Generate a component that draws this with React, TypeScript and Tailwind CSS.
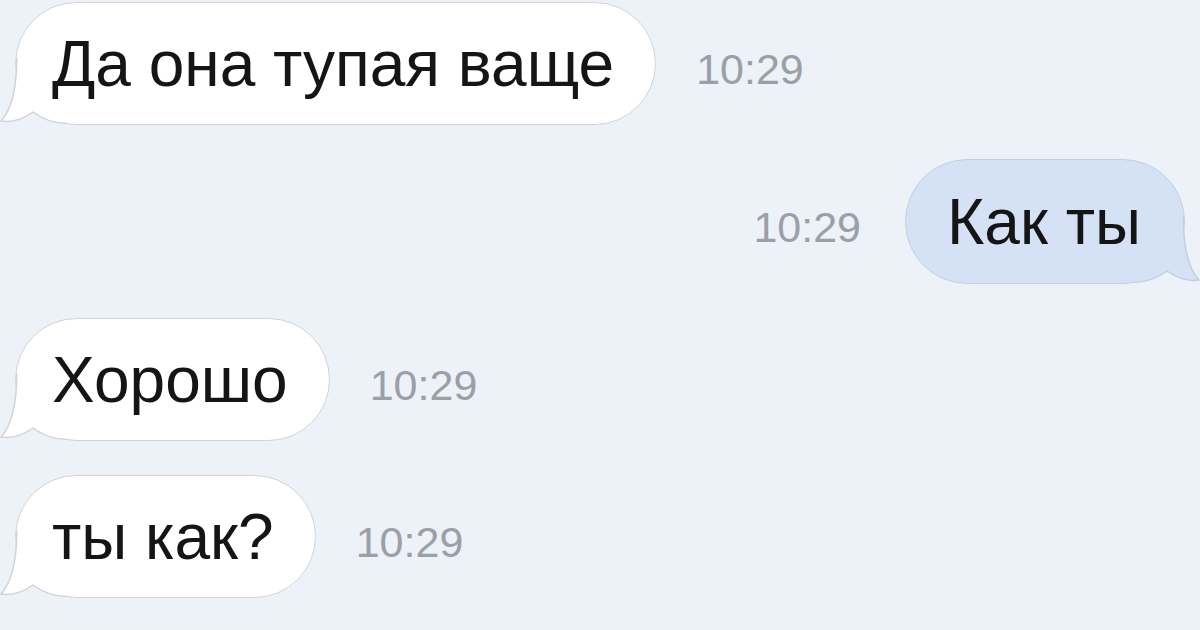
import React from "react";

type Msg = { text: string; time: string; mine?: boolean };

const messages: Msg[] = [
  { text: "Да она тупая ваще", time: "10:29" },
  { text: "Как ты", time: "10:29", mine: true },
  { text: "Хорошо", time: "10:29" },
  { text: "ты как?", time: "10:29" },
];

// tail drawn in coords relative to the bubble's bottom-left corner
const Tail = ({ mine }: { mine?: boolean }) => {
  const fill = mine ? "#d5e2f5" : "#ffffff";
  const stroke = mine ? "#c2cfe1" : "#d0d3d9";
  return (
    <svg
      width="68"
      height="70"
      viewBox="-17 -69 68 70"
      className={
        mine
          ? "absolute -right-[17px] -bottom-px -scale-x-100"
          : "absolute -left-[17px] -bottom-px"
      }
    >
      <path
        d="M 0.75 -66 C 0.75 -38 -3 -16 -15 -3 C -5 -1.5 7 -5 17 -12 C 25 -6 35 -0.75 50 -0.75 L 50 -40 Z"
        fill={fill}
      />
      <path
        d="M 0.75 -66 C 0.75 -38 -3 -16 -15 -3 C -5 -1.5 7 -5 17 -12 C 25 -6 35 -0.75 50 -0.75"
        fill="none"
        stroke={stroke}
        strokeWidth="1.5"
      />
    </svg>
  );
};

const Time = ({ t }: { t: string }) => (
  <span className="mt-[12px] text-[43px] leading-none text-[#9b9fa6]">{t}</span>
);

export default function App() {
  return (
    <div className="w-[1200px] h-[630px] overflow-hidden bg-[#edf1f8] font-['Liberation_Sans',Arial,sans-serif] flex flex-col gap-[34px] pt-[2px]">
      {messages.map((m, i) =>
        m.mine ? (
          <div key={i} className="flex items-center justify-end gap-[44px] pr-[15px]">
            <Time t={m.time} />
            <div className="relative h-[125px] flex items-center rounded-full bg-[#d5e2f5] border-[1.5px] border-[#c2cfe1] pl-[41px] pr-[43px]">
              <Tail mine />
              <span className="relative z-10 text-[64px] leading-none text-[#151515]">{m.text}</span>
            </div>
          </div>
        ) : (
          <div key={i} className="flex items-center gap-[40px] pl-[15px]">
            <div className="relative h-[123px] flex items-center rounded-full bg-white border-[1.5px] border-[#d0d3d9] pl-[36px] pr-[41px]">
              <Tail />
              <span className="relative z-10 text-[64px] leading-none text-[#151515]">{m.text}</span>
            </div>
            <Time t={m.time} />
          </div>
        )
      )}
    </div>
  );
}
